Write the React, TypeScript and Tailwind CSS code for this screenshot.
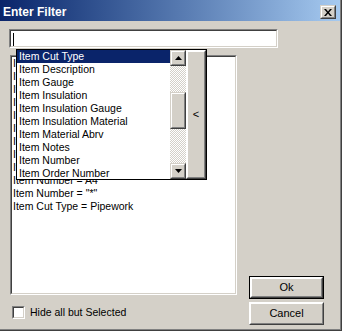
import React from 'react';

const fields = [
  'Item Cut Type',
  'Item Description',
  'Item Gauge',
  'Item Insulation',
  'Item Insulation Gauge',
  'Item Insulation Material',
  'Item Material Abrv',
  'Item Notes',
  'Item Number',
  'Item Order Number',
];

// rows under the popup only show their first letter
const filters = [
  'Item Gauge = 26',
  'Item Gauge = 24',
  'Item Insulation = None',
  'Item Number = A1',
  'Item Number = A2',
  'Item Number = A3',
  'Item Notes = ""',
  'Item Description = Elbow',
  'Item Description = Tee',
  'Item Number = A4',
  'Item Number = "*"',
  'Item Cut Type = Pipework',
];

function Raised({ className = '', children }: { className?: string; children?: React.ReactNode }) {
  return (
    <div className={`border border-t-[#d4d0c8] border-l-[#d4d0c8] border-r-[#404040] border-b-[#404040] ${className}`}>
      <div className="w-full h-full border border-t-white border-l-white border-r-[#808080] border-b-[#808080] bg-[#d4d0c8] flex items-center justify-center">
        {children}
      </div>
    </div>
  );
}

function Sunken({ className = '', children }: { className?: string; children?: React.ReactNode }) {
  return (
    <div className={`border border-t-[#808080] border-l-[#808080] border-r-white border-b-white ${className}`}>
      <div className="w-full h-full border border-t-[#404040] border-l-[#404040] border-r-[#d4d0c8] border-b-[#d4d0c8] bg-white overflow-hidden">
        {children}
      </div>
    </div>
  );
}

function Arrow({ down }: { down?: boolean }) {
  return (
    <svg width="7" height="4" viewBox="0 0 7 4">
      {down ? <path d="M0 0H7L3.5 4Z" fill="#000" /> : <path d="M0 4H7L3.5 0Z" fill="#000" />}
    </svg>
  );
}

export default function App() {
  return (
    <div className="w-[342px] h-[331px] bg-[#404040] pr-[1px] pb-[1px] font-['Liberation_Sans',Arial,sans-serif] text-[10.5px] text-black">
      <div className="w-full h-full bg-[#d4d0c8] border-r border-b border-r-[#808080] border-b-[#808080] relative">
        {/* Title bar */}
        <div className="h-[21px] flex items-center pl-[3px] pr-[3px] pt-[3px] bg-gradient-to-r from-[#0a246a] to-[#a6caf0]">
          <span className="flex-1 text-white font-bold text-[12px] leading-none">Enter Filter</span>
          <Raised className="w-[16px] h-[14px] mr-[1px]">
            <svg width="8" height="7" viewBox="0 0 8 7">
              <path d="M0 0h2l2 2.5L6 0h2L5 3.5 8 7H6L4 4.5 2 7H0l3-3.5Z" fill="#000" />
            </svg>
          </Raised>
        </div>

        {/* Filter text box */}
        <Sunken className="ml-[9px] mt-[8px] w-[269px] h-[19px]">
          <div className="ml-[2px] mt-[2px] w-[1px] h-[13px] bg-black" />
        </Sunken>

        <div className="flex">
          <div className="ml-[10px] mt-[7px] w-[227px]">
            <Sunken className="h-[240px]">
              <div className="pl-[1px]">
                {filters.map((f) => (
                  <div key={f} className="h-[13px] leading-[13px] whitespace-pre">{f}</div>
                ))}
              </div>
            </Sunken>
            <div className="flex items-center mt-[11px] ml-[2px] h-[13px]">
              <Sunken className="w-[13px] h-[13px]" />
              <span className="ml-[5px] leading-[13px]">Hide all but Selected</span>
            </div>
          </div>

          <div className="ml-[12px] mt-[228px] flex flex-col gap-[3px]">
            <div className="w-[75px] h-[23px] border border-black">
              <Raised className="w-full h-full !border-t-white !border-l-white">
                <span className="text-[11px]">Ok</span>
              </Raised>
            </div>
            <Raised className="w-[75px] h-[23px] !border-t-white !border-l-white">
              <span className="text-[11px]">Cancel</span>
            </Raised>
          </div>
        </div>

        {/* Field dropdown */}
        <div className="absolute left-[16px] top-[49px] w-[191px] h-[131px] border border-black bg-white flex overflow-hidden">
          <div className="w-[153px]">
            {fields.map((f, i) => (
              <div
                key={f}
                className={`h-[13px] leading-[13px] pl-[2px] whitespace-pre ${i === 0 ? 'bg-[#0a246a] text-white' : ''}`}
              >
                {f}
              </div>
            ))}
          </div>
          <div className="w-[16px] flex flex-col [background-image:repeating-conic-gradient(#d4d0c8_0_25%,#ffffff_0_50%)] [background-size:2px_2px]">
            <Raised className="w-[16px] h-[16px] shrink-0">
              <Arrow />
            </Raised>
            <div className="h-[26px]" />
            <Raised className="w-[16px] h-[37px] shrink-0" />
            <div className="flex-1" />
            <Raised className="w-[16px] h-[16px] shrink-0">
              <Arrow down />
            </Raised>
          </div>
          <Raised className="w-[20px] h-full !border-t-white !border-l-white">
            <span className="text-[11px] leading-none">&lt;</span>
          </Raised>
        </div>
      </div>
    </div>
  );
}
